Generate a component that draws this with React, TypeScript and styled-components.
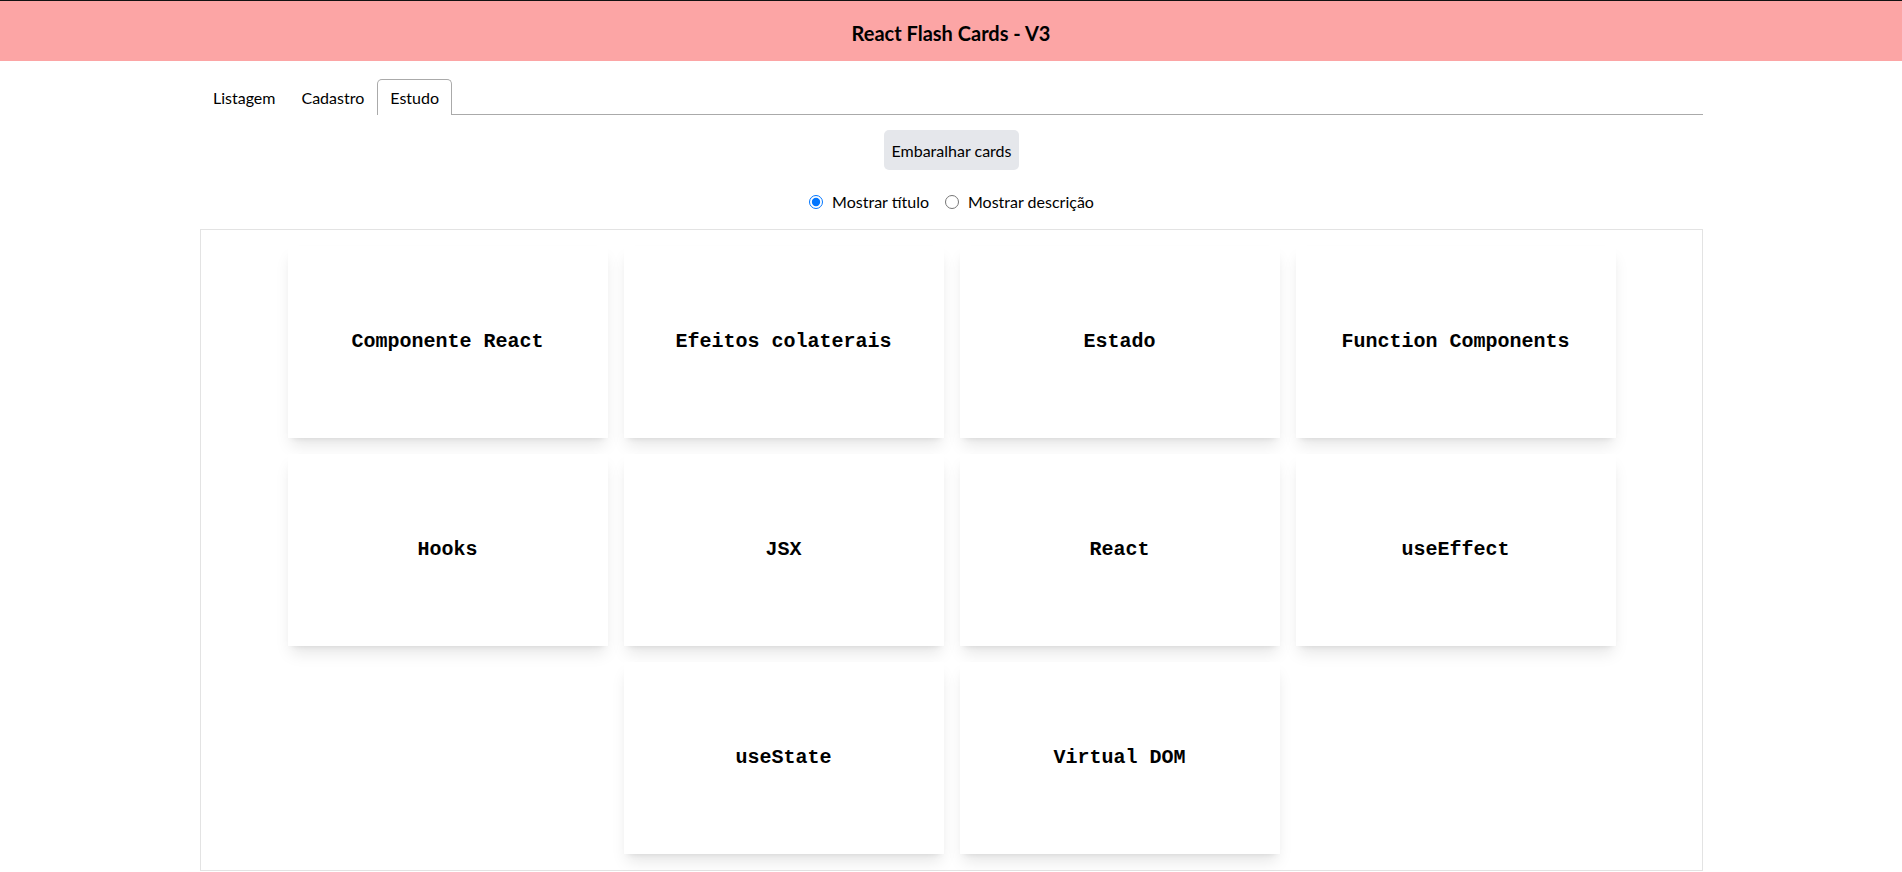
import React, { useState } from 'react';
import styled, { createGlobalStyle } from 'styled-components';

const GlobalStyle = createGlobalStyle`
  html, body {
    margin: 0;
    padding: 0;
    background: #fff;
  }
  body {
    font-family: Lato, "Noto Sans", "Liberation Sans", sans-serif;
    font-size: 16px;
    line-height: 1.5;
    color: #000;
  }
  * {
    box-sizing: border-box;
  }
`;

const Header = styled.header`
  border-top: 1px solid #111;
  background: #fca5a5;
  height: 61px;
  display: flex;
  align-items: center;
  justify-content: center;
  font-size: 20px;
  font-weight: 700;
  padding-top: 4px;
`;

const Main = styled.main`
  padding: 0 199px 0 200px;
`;

const TabList = styled.ul`
  list-style: none;
  margin: 17px 0 0;
  padding: 0;
  border-bottom: 1px solid #aaa;
  display: flex;
`;

interface TabProps {
  selected: boolean;
}
const Tab = styled.li<TabProps>`
  position: relative;
  bottom: -1px;
  padding: 6px 12px 5px;
  cursor: pointer;
  border: 1px solid ${({ selected }) => (selected ? '#aaa' : 'transparent')};
  border-bottom: none;
  border-radius: 5px 5px 0 0;
  background: #fff;
  line-height: 24px;
`;

const Panel = styled.section`
  display: flex;
  flex-direction: column;
  align-items: center;
`;

const ShuffleButton = styled.button`
  margin-top: 15px;
  height: 40px;
  padding: 0 8px;
  border: none;
  border-radius: 5px;
  background: #e5e7eb;
  font-family: inherit;
  font-size: 16px;
  color: #000;
  cursor: pointer;
`;

const RadioRow = styled.div`
  margin-top: 20px;
  display: flex;
  align-items: center;
  gap: 16px;
  height: 24px;
`;

const RadioLabel = styled.label`
  display: flex;
  align-items: center;
  gap: 9px;
  cursor: pointer;
`;

const Radio = styled.input`
  margin: 0;
  width: 14px;
  height: 14px;
  accent-color: #0075ff;
`;

const CardBoard = styled.div`
  align-self: stretch;
  margin-top: 15px;
  border: 1px solid #e3e3e3;
  padding: 8px;
  display: flex;
  flex-wrap: wrap;
  justify-content: center;
`;

const Card = styled.div`
  width: 320px;
  height: 192px;
  margin: 8px;
  background: #fff;
  box-shadow: 0 10px 15px -3px rgba(0, 0, 0, 0.1), 0 4px 6px -4px rgba(0, 0, 0, 0.1);
  display: flex;
  align-items: center;
  justify-content: center;
  font-family: "Liberation Mono", "Courier New", monospace;
  font-weight: 700;
  font-size: 20px;
  cursor: pointer;
`;

const cards = [
  { title: 'Componente React', description: 'Função que retorna JSX' },
  { title: 'Efeitos colaterais', description: 'Ações fora do fluxo de renderização' },
  { title: 'Estado', description: 'Dados que mudam com o tempo' },
  { title: 'Function Components', description: 'Componentes escritos como funções' },
  { title: 'Hooks', description: 'Funções especiais do React' },
  { title: 'JSX', description: 'Sintaxe parecida com HTML' },
  { title: 'React', description: 'Biblioteca para criar interfaces' },
  { title: 'useEffect', description: 'Hook para efeitos colaterais' },
  { title: 'useState', description: 'Hook para estado' },
  { title: 'Virtual DOM', description: 'Representação da DOM em memória' },
];

const tabs = ['Listagem', 'Cadastro', 'Estudo'];

export default function App() {
  const [activeTab, setActiveTab] = useState('Estudo');
  const [showTitle, setShowTitle] = useState(true);

  return (
    <>
      <GlobalStyle />
      <Header>React Flash Cards - V3</Header>
      <Main>
        <TabList>
          {tabs.map((t) => (
            <Tab key={t} selected={activeTab === t} onClick={() => setActiveTab(t)}>
              {t}
            </Tab>
          ))}
        </TabList>
        <Panel>
          <ShuffleButton>Embaralhar cards</ShuffleButton>
          <RadioRow>
            <RadioLabel>
              <Radio type="radio" name="show" checked={showTitle} onChange={() => setShowTitle(true)} />
              Mostrar título
            </RadioLabel>
            <RadioLabel>
              <Radio type="radio" name="show" checked={!showTitle} onChange={() => setShowTitle(false)} />
              Mostrar descrição
            </RadioLabel>
          </RadioRow>
          <CardBoard>
            {cards.map((c) => (
              <Card key={c.title}>{showTitle ? c.title : c.description}</Card>
            ))}
          </CardBoard>
        </Panel>
      </Main>
    </>
  );
}
